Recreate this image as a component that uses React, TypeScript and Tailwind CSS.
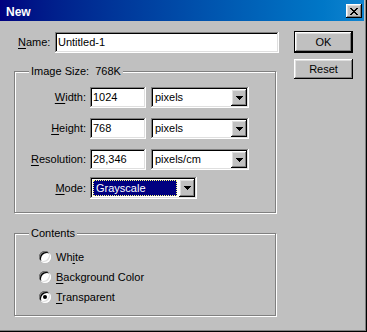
import React from 'react';

// Win98 style bevels
const raised = 'shadow-[inset_-1px_-1px_0_#000,inset_1px_1px_0_#fff,inset_-2px_-2px_0_#808080,inset_2px_2px_0_#dfdfdf]';
const sunken = 'shadow-[inset_-1px_-1px_0_#fff,inset_1px_1px_0_#808080,inset_-2px_-2px_0_#dfdfdf,inset_2px_2px_0_#000]';
const etched = 'border border-[#808080] shadow-[inset_1px_1px_0_#fff,1px_1px_0_#fff]';

const U: React.FC<{ children: React.ReactNode }> = ({ children }) => (
  <span className="underline underline-offset-[2px] decoration-1">{children}</span>
);

const DownArrow = () => (
  <svg width="7" height="4" viewBox="0 0 7 4" shapeRendering="crispEdges">
    <rect x="0" y="0" width="7" height="1" fill="#000" />
    <rect x="1" y="1" width="5" height="1" fill="#000" />
    <rect x="2" y="2" width="3" height="1" fill="#000" />
    <rect x="3" y="3" width="1" height="1" fill="#000" />
  </svg>
);

const ArrowButton = () => (
  <div className={`w-[16px] h-full shrink-0 bg-[#c0c0c0] flex items-center justify-center ${raised}`}>
    <DownArrow />
  </div>
);

const Field: React.FC<{ value: string; width: string }> = ({ value, width }) => (
  <div className={`${width} h-[21px] bg-white ${sunken} pl-[3px] flex items-center`}>{value}</div>
);

const Select: React.FC<{ value: string; width: string }> = ({ value, width }) => (
  <div className={`${width} h-[21px] bg-white ${sunken} p-[2px] flex`}>
    <div className="flex-1 pl-[2px] flex items-center">{value}</div>
    <ArrowButton />
  </div>
);

const Row: React.FC<{ label: React.ReactNode; className?: string; children: React.ReactNode }> = ({ label, className, children }) => (
  <div className={`flex items-center ${className ?? ''}`}>
    <div className="w-[71px] text-right">{label}</div>
    <div className="ml-[4px] flex gap-[5px]">{children}</div>
  </div>
);

const Radio: React.FC<{ checked?: boolean; children: React.ReactNode }> = ({ checked, children }) => (
  <div className="flex items-center h-[20px]">
    <div className={`w-[12px] h-[12px] rounded-full bg-white ${sunken} flex items-center justify-center`}>
      {checked && <div className="w-[4px] h-[4px] rounded-full bg-black" />}
    </div>
    <span className="ml-[5px]">{children}</span>
  </div>
);

export default function App() {
  return (
    <div className="w-[367px] h-[332px] bg-[#c0c0c0] border-r border-b border-black shadow-[inset_-1px_-1px_0_#808080] font-['Liberation_Sans',Arial,sans-serif] text-[11px] text-black leading-none overflow-hidden">
      {/* Title bar */}
      <div className="h-[21px] mr-[2px] bg-linear-to-r from-[#000080] to-[#1084d0] flex items-center pl-[6px] pr-[2px]">
        <span className="text-white font-bold text-[12px] pt-[2px]">New</span>
        <div className={`ml-auto mt-[1px] w-[16px] h-[14px] bg-[#c0c0c0] ${raised} flex items-center justify-center`}>
          <svg width="8" height="7" viewBox="0 0 8 7" shapeRendering="crispEdges">
            <path d="M0 0h2v1h-2zM6 0h2v1h-2zM1 1h2v1h-2zM5 1h2v1h-2zM2 2h4v1h-4zM3 3h2v1h-2zM2 4h4v1h-4zM1 5h2v1h-2zM5 5h2v1h-2zM0 6h2v1h-2zM6 6h2v1h-2z" fill="#000" />
          </svg>
        </div>
      </div>

      <div className="flex">
        {/* Left column */}
        <div className="w-[280px] shrink-0 pl-[14px] flex flex-col">
          <div className="mt-[11px] flex items-center">
            <div className="ml-[4px] w-[37px]">
              <U>N</U>ame:
            </div>
            <Field value="Untitled-1" width="w-[224px]" />
          </div>

          {/* Image Size */}
          <div className={`relative mt-[18px] w-[262px] h-[142px] ${etched} pt-[15px]`}>
            <span className="absolute -top-[6px] left-[14px] px-[2px] bg-[#c0c0c0]">Image Size:&nbsp;&nbsp;768K</span>
            <Row label={<><U>W</U>idth:</>}>
              <Field value="1024" width="w-[56px]" />
              <Select value="pixels" width="w-[98px]" />
            </Row>
            <Row className="mt-[10px]" label={<><U>H</U>eight:</>}>
              <Field value="768" width="w-[56px]" />
              <Select value="pixels" width="w-[98px]" />
            </Row>
            <Row className="mt-[10px]" label={<><U>R</U>esolution:</>}>
              <Field value="28,346" width="w-[56px]" />
              <Select value="pixels/cm" width="w-[98px]" />
            </Row>
            <Row className="mt-[7px]" label={<><U>M</U>ode:</>}>
              <div className={`w-[107px] h-[22px] bg-white ${sunken} p-[2px] flex`}>
                <div className="flex-1 p-[1px] pr-[2px]">
                  <div className="h-full bg-[#000080] text-white border border-dotted border-[#ffff80] pl-[2px] flex items-center">
                    Grayscale
                  </div>
                </div>
                <ArrowButton />
              </div>
            </Row>
          </div>

          {/* Contents */}
          <div className={`relative mt-[20px] w-[262px] h-[83px] ${etched} pt-[13px] pl-[24px]`}>
            <span className="absolute -top-[6px] left-[14px] px-[2px] bg-[#c0c0c0]">Contents</span>
            <Radio>
              Wh<U>i</U>te
            </Radio>
            <Radio>
              <U>B</U>ackground Color
            </Radio>
            <Radio checked>
              <U>T</U>ransparent
            </Radio>
          </div>
        </div>

        {/* Buttons */}
        <div className="ml-[14px] flex flex-col">
          <div className="mt-[10px] w-[59px] h-[22px] border border-black">
            <div className={`w-full h-full bg-[#c0c0c0] ${raised} flex items-center justify-center`}>OK</div>
          </div>
          <div className={`mt-[6px] w-[59px] h-[20px] bg-[#c0c0c0] ${raised} flex items-center justify-center`}>Reset</div>
        </div>
      </div>
    </div>
  );
}
